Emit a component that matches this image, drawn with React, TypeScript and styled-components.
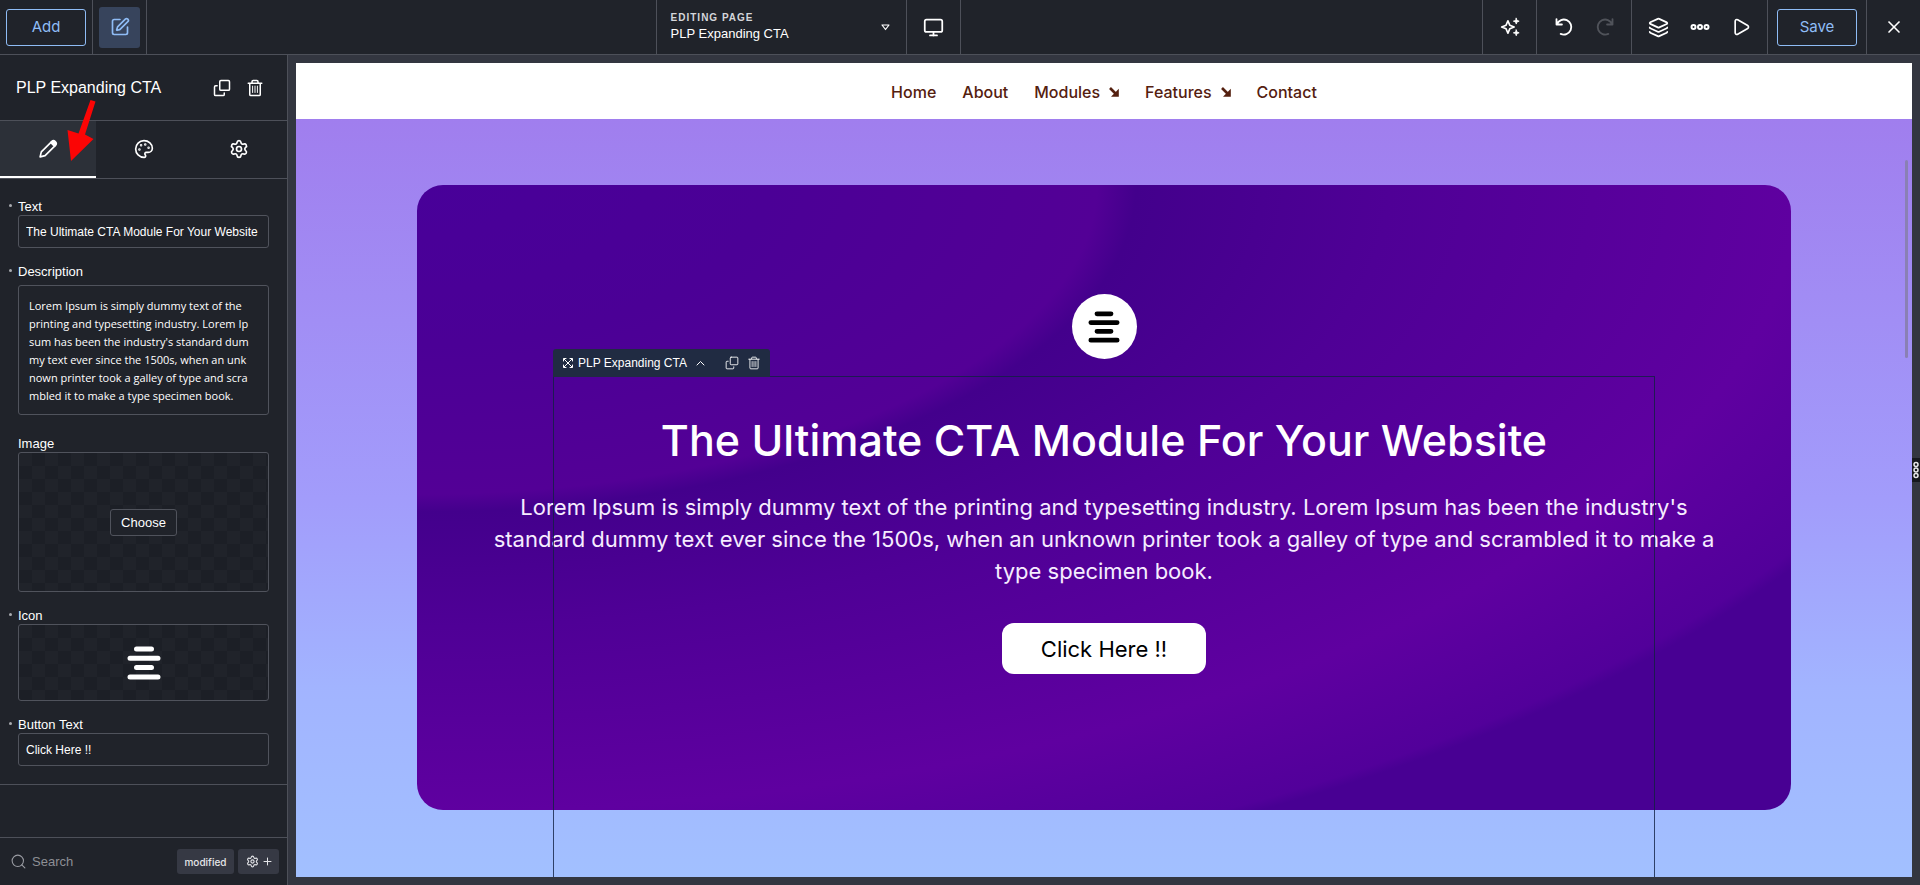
import React from 'react';
import styled, { createGlobalStyle, css } from 'styled-components';
import { Layers, Monitor, Palette, Play, Search, Settings, SquarePen, X } from 'lucide-react';

const ui = '"Liberation Sans", Arial, sans-serif';
const site = 'Inter, "Open Sans", sans-serif';
const line = '#4d5059';
const panel = '#20232a';

const GlobalStyle = createGlobalStyle`
  *, *::before, *::after { box-sizing: border-box; }
  body { margin: 0; background: #333640; font-family: ${ui}; color: #fff; }
  button, input, textarea { font-family: inherit; color: inherit; margin: 0; }
  button { cursor: pointer; padding: 0; }
`;

const Shell = styled.div`
  display: flex;
  flex-direction: column;
  height: 100vh;
  min-height: 600px;
  overflow: hidden;
`;

/* ---------- top bar ---------- */

const TopBar = styled.header`
  display: flex;
  height: 55px;
  flex: none;
  background: ${panel};
  border-bottom: 1px solid ${line};
`;

const BarSide = styled.div<{ $grow: number; $end?: boolean }>`
  flex: ${(p) => p.$grow} 1 0;
  display: flex;
  justify-content: ${(p) => (p.$end ? 'flex-end' : 'flex-start')};
`;

const Cell = styled.div<{ $edge: 'left' | 'right' | 'both'; $pad?: number }>`
  display: flex;
  align-items: center;
  padding: 0 ${(p) => p.$pad ?? 6}px;
  ${(p) => p.$edge !== 'right' && css`border-left: 1px solid ${line};`}
  ${(p) => p.$edge !== 'left' && css`border-right: 1px solid ${line};`}
`;

const OutlineButton = styled.button`
  width: 80px;
  height: 37px;
  border: 1px solid #8fbcf5;
  border-radius: 3px;
  background: transparent;
  color: #8fbcf5;
  font: 400 15px/20px ${site};
`;

const ToolButton = styled.button<{ $active?: boolean; $muted?: boolean }>`
  width: 41px;
  height: 41px;
  display: flex;
  align-items: center;
  justify-content: center;
  border: 0;
  border-radius: 3px;
  background: ${(p) => (p.$active ? '#37445c' : 'transparent')};
  color: ${(p) => (p.$active ? '#8fbcf5' : p.$muted ? '#50535a' : '#fff')};
`;

const PageSwitch = styled.button`
  width: 250px;
  display: flex;
  align-items: center;
  justify-content: space-between;
  padding: 0 16px 1px 14px;
  border: 0;
  border-left: 1px solid ${line};
  background: transparent;
  text-align: left;
`;

const PageNames = styled.span`
  display: flex;
  flex-direction: column;
`;

const Overline = styled.span`
  font-size: 10px;
  line-height: 14px;
  font-weight: 700;
  letter-spacing: 1px;
  color: #d4d6da;
`;

const PageName = styled.span`
  font-size: 13px;
  line-height: 18px;
`;

/* ---------- sidebar ---------- */

const Body = styled.div`
  flex: 1;
  display: flex;
  min-height: 0;
`;

const Sidebar = styled.aside`
  width: 288px;
  flex: none;
  display: flex;
  flex-direction: column;
  background: ${panel};
  border-right: 1px solid ${line};
`;

const PanelHead = styled.div`
  height: 66px;
  flex: none;
  display: flex;
  align-items: center;
  justify-content: space-between;
  padding: 0 16px;
  border-bottom: 1px solid ${line};
`;

const PanelTitle = styled.h2`
  margin: 0;
  font-size: 16px;
  line-height: 24px;
  font-weight: 400;
`;

const HeadActions = styled.div`
  display: flex;
`;

const SmallButton = styled.button<{ $w: number }>`
  width: ${(p) => p.$w}px;
  height: 24px;
  display: flex;
  align-items: center;
  justify-content: center;
  border: 0;
  background: transparent;
  color: inherit;
`;

const Tabs = styled.div`
  display: flex;
  height: 58px;
  flex: none;
  border-bottom: 1px solid ${line};
`;

const Tab = styled.button<{ $active?: boolean }>`
  flex: 1;
  display: flex;
  align-items: center;
  justify-content: center;
  border: 0;
  border-bottom: 2px solid ${(p) => (p.$active ? '#fff' : 'transparent')};
  background: ${(p) => (p.$active ? '#2c3038' : 'transparent')};
`;

const Form = styled.form`
  flex: none;
  display: flex;
  flex-direction: column;
  gap: 16px;
  padding: 20px 18px 18px;
  border-bottom: 1px solid ${line};
`;

const Field = styled.div<{ $roomy?: boolean }>`
  display: flex;
  flex-direction: column;
  gap: ${(p) => (p.$roomy ? 5 : 0)}px;
  padding-bottom: ${(p) => (p.$roomy ? 5 : 0)}px;
`;

const Label = styled.label<{ $changed?: boolean }>`
  position: relative;
  font-size: 13px;
  line-height: 16px;
  ${(p) =>
    p.$changed &&
    css`
      &::before {
        content: '';
        position: absolute;
        left: -9px;
        top: 5px;
        width: 3px;
        height: 3px;
        border-radius: 50%;
        background: #a9abb0;
      }
    `}
`;

const framed = css`
  border: 1px solid #50535c;
  border-radius: 3px;
  background-color: ${panel};
  outline: none;
`;

const TextInput = styled.input`
  ${framed}
  width: 100%;
  height: 33px;
  padding: 0 7px;
  font-size: 12px;
`;

const TextArea = styled.textarea`
  ${framed}
  width: 100%;
  height: 130px;
  padding: 11px 10px;
  resize: none;
  overflow: hidden;
  white-space: pre;
  font: 400 11px/18px "Open Sans", "Noto Sans", sans-serif;
`;

const Checker = styled.div<{ $h: number }>`
  ${framed}
  height: ${(p) => p.$h}px;
  display: flex;
  align-items: center;
  justify-content: center;
  background-image: conic-gradient(#1c1f26 25%, transparent 0 50%, #1c1f26 0 75%, transparent 0);
  background-size: 26px 26px;
`;

const ChooseButton = styled.button`
  ${framed}
  width: 67px;
  height: 27px;
  font-size: 13px;
`;

const PanelFoot = styled.div`
  margin-top: auto;
  height: 48px;
  flex: none;
  display: flex;
  align-items: center;
  gap: 4px;
  padding: 0 8px 0 10px;
  border-top: 1px solid ${line};
`;

const SearchBox = styled.label`
  flex: 1;
  min-width: 0;
  display: flex;
  align-items: center;
  gap: 3px;
  color: #9a9ca3;
`;

const SearchInput = styled.input`
  flex: 1;
  min-width: 0;
  border: 0;
  outline: none;
  background: transparent;
  font-size: 13px;
  &::placeholder { color: #8d8f95; opacity: 1; }
`;

const Chip = styled.button<{ $w: number }>`
  width: ${(p) => p.$w}px;
  height: 25px;
  display: flex;
  align-items: center;
  justify-content: center;
  gap: 4px;
  border: 0;
  border-radius: 3px;
  background: #363944;
  color: #e4e5e8;
  font: 500 10px/14px ${site};
`;

/* ---------- page preview ---------- */

const Stage = styled.main`
  position: relative;
  flex: 1;
  min-width: 0;
  padding: 8px;
`;

const Canvas = styled.div`
  position: relative;
  height: 100%;
  overflow: hidden;
  display: flex;
  flex-direction: column;
  font-family: ${site};
`;

const SiteNav = styled.nav`
  flex: none;
  height: 56px;
  display: flex;
  align-items: center;
  justify-content: center;
  gap: 26px;
  background: #fff;
  padding-top: 2px;
`;

const NavLink = styled.a`
  display: flex;
  align-items: center;
  gap: 9px;
  color: #54200f;
  font-size: 16px;
  line-height: 24px;
  font-weight: 500;
  text-decoration: none;
`;

const Hero = styled.section`
  flex: 1;
  padding: 66px 121px 0;
  background: linear-gradient(180deg, #a07eee 0%, #a29cfb 50%, #a2b4ff 75%, #a2c0ff 100%);
`;

const Card = styled.div`
  min-height: 625px;
  padding: 109px 60px 0;
  border-radius: 26px;
  display: flex;
  flex-direction: column;
  align-items: center;
  text-align: center;
  background: radial-gradient(
    ellipse farthest-corner at 0 0,
    #480099 0%,
    #4b0096 18%,
    #530096 35%,
    #43008c 37%,
    #4f0096 50%,
    #5f00a0 71%,
    #5a009e 75%,
    #52009a 82%,
    #480093 83%,
    #480093 100%
  );
`;

const IconDisc = styled.div`
  width: 65px;
  height: 65px;
  display: flex;
  align-items: center;
  justify-content: center;
  border-radius: 50%;
  background: #fff;
  color: #000;
`;

const Title = styled.h1`
  margin: 53px 0 0;
  font-size: 43px;
  line-height: 56px;
  font-weight: 500;
`;

const Lead = styled.p`
  margin: 23px 0 0;
  font-size: 22px;
  line-height: 32px;
  color: #f6ecff;
  white-space: nowrap;
`;

const CtaButton = styled.button`
  margin-top: 36px;
  width: 204px;
  height: 51px;
  border: 0;
  border-radius: 12px;
  background: #fff;
  color: #000;
  font-size: 22px;
  line-height: 32px;
`;

const Selection = styled.div`
  position: absolute;
  top: 313px;
  bottom: 0;
  left: 257px;
  right: 257px;
  border: solid rgba(18, 32, 66, 0.8);
  border-width: 1px 1px 0;
  pointer-events: none;
`;

const SelectionBar = styled.div`
  position: absolute;
  left: -1px;
  bottom: 100%;
  width: 217px;
  height: 28px;
  display: flex;
  align-items: center;
  padding: 0 5px 0 10px;
  border-radius: 3px 3px 0 0;
  background: #202b42;
  font-family: ${ui};
  font-size: 12px;
  line-height: 16px;
  gap: 5px;
  pointer-events: auto;
`;

const BarActions = styled.div`
  display: flex;
  margin-left: auto;
`;

const ScrollThumb = styled.div`
  position: absolute;
  top: 97px;
  right: 4px;
  width: 3px;
  height: 198px;
  border-radius: 2px;
  background: #8a80b4;
`;

const Grip = styled.button`
  position: absolute;
  right: 0;
  top: 50%;
  width: 8px;
  height: 24px;
  transform: translateY(-50%);
  border: 0;
  background: #16181d;
  display: flex;
  align-items: center;
  justify-content: center;
`;

const Pointer = styled.svg`
  position: absolute;
  left: 64px;
  top: 98px;
  pointer-events: none;
`;

/* ---------- drawings ---------- */

const stroke = {
  fill: 'none',
  stroke: 'currentColor',
  strokeLinecap: 'round' as const,
  strokeLinejoin: 'round' as const,
};

const CopyIcon = ({ size = 18, w = 2 }) => (
  <svg width={size} height={size} viewBox="0 0 24 24" {...stroke} strokeWidth={w}>
    <rect x="9" y="2" width="13" height="13" rx="1.5" />
    <path d="M5.5 9H3.5a1.5 1.5 0 0 0-1.5 1.5v10a1.5 1.5 0 0 0 1.5 1.5h10a1.5 1.5 0 0 0 1.5-1.5v-2" />
  </svg>
);

const TrashIcon = ({ size = 18, w = 2 }) => (
  <svg width={size} height={size} viewBox="0 0 24 24" {...stroke} strokeWidth={w}>
    <path d="M3 5.5h18M5 5.5v15a1.5 1.5 0 0 0 1.5 1.5h11a1.5 1.5 0 0 0 1.5-1.5v-15M8 5V3.5A1.5 1.5 0 0 1 9.5 2h5A1.5 1.5 0 0 1 16 3.5V5" />
    <path d="M8.800 9.500v8.500M12 9.500v8.500M15.200 9.500v8.500" strokeWidth="1.300" />
  </svg>
);

const PencilIcon = () => (
  <svg width="20" height="20" viewBox="0 0 24 24" {...stroke} strokeWidth="2">
    <path d="M2.500 21.500l1.500-6L15.500 4l4.500 4.500L8.500 20z" />
    <path d="M15.500 4l1.200-1.200a2.500 2.500 0 0 1 3.600 0l.9.9a2.500 2.500 0 0 1 0 3.600L20 8.500z" fill="currentColor" />
  </svg>
);

const SparkleIcon = () => (
  <svg width="20" height="20" viewBox="0 0 24 24" {...stroke} strokeWidth="2">
    <path d="M9.500 4.500l2.200 5.300 5.300 2.200-5.300 2.200-2.200 5.300-2.200-5.300L2 12l5.300-2.200z" />
    <path d="M19.500 1.500l.9 2.600 2.600.9-2.600.9-.9 2.600-.9-2.600L16 5l2.600-.9zM19.500 15.500l.9 2.600 2.600.9-2.600.9-.9 2.600-.9-2.600L16 19l2.600-.9z" fill="currentColor" strokeWidth="1" />
  </svg>
);

const TurnIcon = ({ flip = false }) => (
  <svg width="20" height="20" viewBox="0 0 24 24" {...stroke} strokeWidth="2.200">
    <g transform={flip ? 'matrix(-1 0 0 1 24 0)' : undefined}>
      <path d="M3 2.500v6.500h6.500M3.500 8.500A9 9 0 1 1 8 20.200" />
    </g>
  </svg>
);

const DotsIcon = () => (
  <svg width="20" height="20" viewBox="0 0 20 20" {...stroke} strokeWidth="2">
    <circle cx="3.500" cy="10" r="2" />
    <circle cx="10" cy="10" r="2" />
    <circle cx="16.500" cy="10" r="2" />
  </svg>
);

const BarsIcon = ({ size }: { size: number }) => (
  <svg width={size} height={size} viewBox="0 0 34 34" stroke="currentColor" strokeWidth="5" strokeLinecap="round">
    <path d="M9.500 3h15M3 12.300h28M9.500 21.600h15M3 31h28" />
  </svg>
);

const NavArrow = () => (
  <svg width="10" height="10" viewBox="0 0 10 10">
    <path d="M1 1l5.500 5.500" stroke="currentColor" strokeWidth="2.600" />
    <path d="M9.800 1.800v8H2z" fill="currentColor" />
  </svg>
);

const ExpandIcon = () => (
  <svg width="10" height="10" viewBox="0 0 10 10" {...stroke} strokeWidth="1">
    <path d="M1 1l8 8M9 1L1 9M.5 3V.5H3M7 .5h2.500V3M9.500 7v2.500H7M3 9.500H.5V7" />
  </svg>
);

const description = [
  'Lorem Ipsum is simply dummy text of the',
  'printing and typesetting industry. Lorem Ip',
  "sum has been the industry's standard dum",
  'my text ever since the 1500s, when an unk',
  'nown printer took a galley of type and scra',
  'mbled it to make a type specimen book.',
].join('\n');

const links = [
  { text: 'Home' },
  { text: 'About' },
  { text: 'Modules', menu: true },
  { text: 'Features', menu: true },
  { text: 'Contact' },
];

export default function App() {
  return (
    <Shell>
      <GlobalStyle />
      <TopBar>
        <BarSide $grow={656}>
          <Cell $edge="right">
            <OutlineButton>Add</OutlineButton>
          </Cell>
          <Cell $edge="right">
            <ToolButton $active aria-label="Edit">
              <SquarePen size={20} />
            </ToolButton>
          </Cell>
        </BarSide>
        <PageSwitch>
          <PageNames>
            <Overline>EDITING PAGE</Overline>
            <PageName>PLP Expanding CTA</PageName>
          </PageNames>
          <svg width="9" height="8" viewBox="0 0 9 8" {...stroke} strokeWidth="1.200">
            <path d="M1 2h7L4.500 6.500z" />
          </svg>
        </PageSwitch>
        <Cell $edge="both">
          <ToolButton aria-label="Screen size">
            <Monitor size={21} />
          </ToolButton>
        </Cell>
        <BarSide $grow={960} $end>
          <Cell $edge="left">
            <ToolButton aria-label="Assistant"><SparkleIcon /></ToolButton>
          </Cell>
          <Cell $edge="left">
            <ToolButton aria-label="Undo"><TurnIcon /></ToolButton>
            <ToolButton aria-label="Redo" $muted><TurnIcon flip /></ToolButton>
          </Cell>
          <Cell $edge="left">
            <ToolButton aria-label="Layers"><Layers size={21} /></ToolButton>
            <ToolButton aria-label="More"><DotsIcon /></ToolButton>
            <ToolButton aria-label="Preview"><Play size={20} /></ToolButton>
          </Cell>
          <Cell $edge="left" $pad={9}>
            <OutlineButton>Save</OutlineButton>
          </Cell>
          <Cell $edge="left">
            <ToolButton aria-label="Close"><X size={20} /></ToolButton>
          </Cell>
        </BarSide>
      </TopBar>

      <Body>
        <Sidebar>
          <PanelHead>
            <PanelTitle>PLP Expanding CTA</PanelTitle>
            <HeadActions>
              <SmallButton $w={33} aria-label="Duplicate"><CopyIcon /></SmallButton>
              <SmallButton $w={33} aria-label="Delete"><TrashIcon /></SmallButton>
            </HeadActions>
          </PanelHead>
          <Tabs>
            <Tab $active aria-label="Content"><PencilIcon /></Tab>
            <Tab aria-label="Design"><Palette size={20} /></Tab>
            <Tab aria-label="Settings"><Settings size={20} /></Tab>
          </Tabs>
          <Form onSubmit={(e) => e.preventDefault()}>
            <Field>
              <Label $changed htmlFor="text">Text</Label>
              <TextInput id="text" defaultValue="The Ultimate CTA Module For Your Website" />
            </Field>
            <Field $roomy>
              <Label $changed htmlFor="description">Description</Label>
              <TextArea id="description" defaultValue={description} />
            </Field>
            <Field>
              <Label htmlFor="image">Image</Label>
              <Checker $h={140}>
                <ChooseButton id="image" type="button">Choose</ChooseButton>
              </Checker>
            </Field>
            <Field>
              <Label $changed as="span">Icon</Label>
              <Checker $h={77}><BarsIcon size={34} /></Checker>
            </Field>
            <Field>
              <Label $changed htmlFor="button-text">Button Text</Label>
              <TextInput id="button-text" defaultValue="Click Here !!" />
            </Field>
          </Form>
          <PanelFoot>
            <SearchBox>
              <Search size={17} strokeWidth={1.5} />
              <SearchInput placeholder="Search" aria-label="Search" />
            </SearchBox>
            <Chip $w={57}>modified</Chip>
            <Chip $w={41} aria-label="Add filter">
              <Settings size={13} />
              <svg width="9" height="9" viewBox="0 0 9 9" {...stroke}>
                <path d="M4.500 1v7M1 4.500h7" />
              </svg>
            </Chip>
          </PanelFoot>
        </Sidebar>

        <Stage>
          <Canvas>
            <SiteNav>
              {links.map((l) => (
                <NavLink key={l.text} href="#">
                  {l.text}
                  {l.menu && <NavArrow />}
                </NavLink>
              ))}
            </SiteNav>
            <Hero>
              <Card>
                <IconDisc><BarsIcon size={32} /></IconDisc>
                <Title>The Ultimate CTA Module For Your Website</Title>
                <Lead>
                  Lorem Ipsum is simply dummy text of the printing and typesetting industry. Lorem Ipsum has been the industry's
                  <br />
                  standard dummy text ever since the 1500s, when an unknown printer took a galley of type and scrambled it to make a
                  <br />
                  type specimen book.
                </Lead>
                <CtaButton>Click Here !!</CtaButton>
              </Card>
            </Hero>
            <Selection>
              <SelectionBar>
                <ExpandIcon />
                PLP Expanding CTA
                <SmallButton $w={18} aria-label="Select parent">
                  <svg width="9" height="6" viewBox="0 0 9 6" {...stroke} strokeWidth="1">
                    <path d="M1 5l3.500-3.500L8 5" />
                  </svg>
                </SmallButton>
                <BarActions>
                  <SmallButton $w={22} aria-label="Duplicate"><CopyIcon size={14} w={1.5} /></SmallButton>
                  <SmallButton $w={22} aria-label="Delete"><TrashIcon size={14} w={1.5} /></SmallButton>
                </BarActions>
              </SelectionBar>
            </Selection>
            <ScrollThumb />
          </Canvas>
          <Grip aria-label="Resize preview">
            <svg width="6" height="18" viewBox="0 0 6 18" fill="none" stroke="#e8e8ea" strokeWidth="1.500">
              <circle cx="3" cy="3.500" r="2" />
              <circle cx="3" cy="9" r="2" />
              <circle cx="3" cy="14.500" r="2" />
            </svg>
          </Grip>
        </Stage>
      </Body>

      <Pointer width="34" height="66" viewBox="64 98 34 66" fill="#fb0505">
        <path d="M90.500 100l5 1.500-10.500 33 8.500 4.500L71 161l-3.500-31 11 3.500z" />
      </Pointer>
    </Shell>
  );
}
